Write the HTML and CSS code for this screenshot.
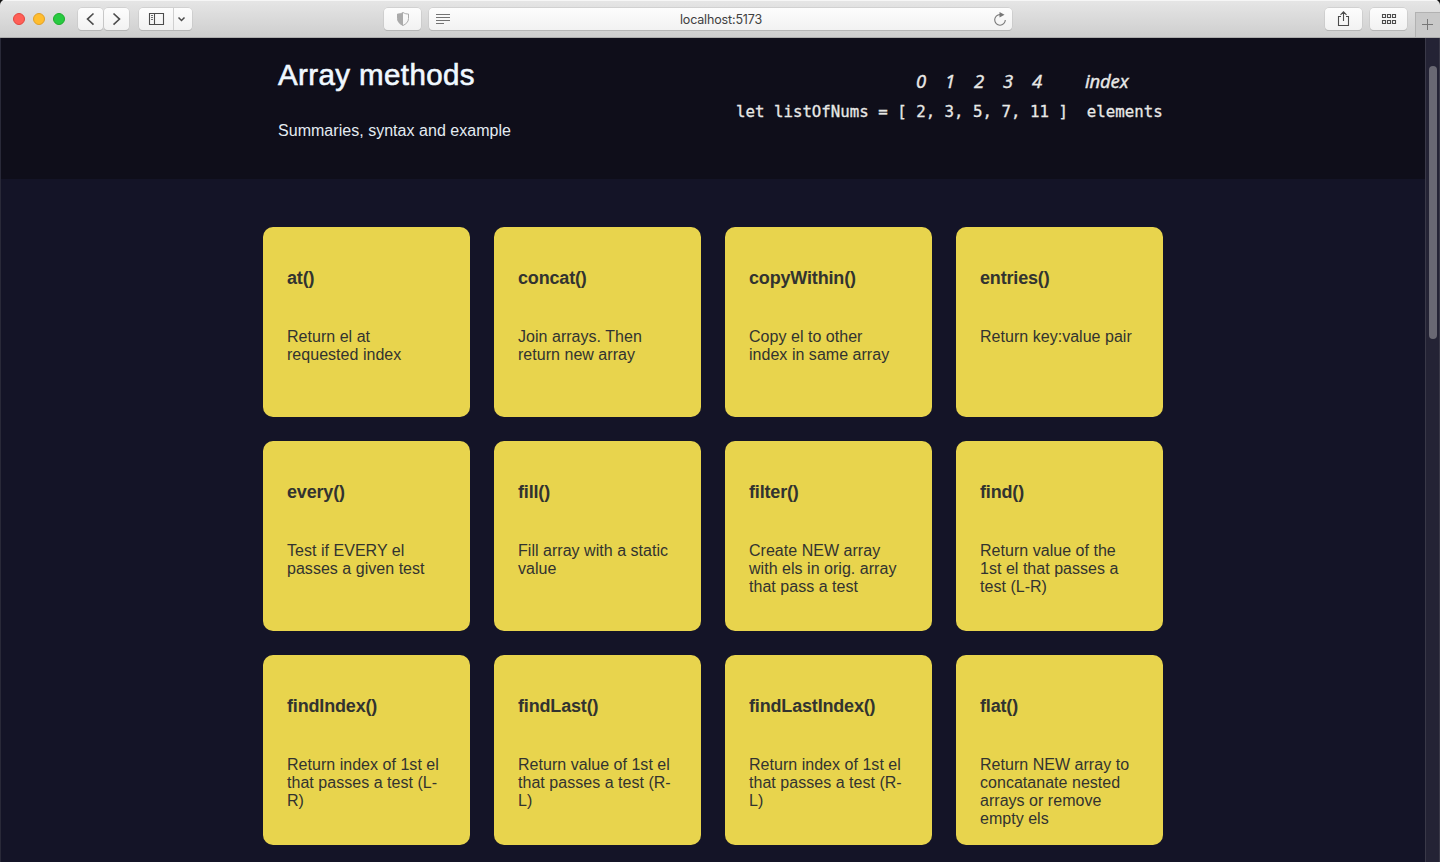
FILE: index.html
```html
<!DOCTYPE html>
<html lang="en">
<head>
<meta charset="utf-8">
<title>Array methods</title>
<link rel="stylesheet" href="styles.css">
</head>
<body>
<div class="window">
  <div class="toolbar">
    <div class="lights"><i class="light red"></i><i class="light amber"></i><i class="light green"></i></div>
    <div class="nav">
      <div class="btn back"><svg width="26" height="23" viewBox="0 0 26 23"><path d="M15.500 5.500l-6 5.600 6 5.600" class="line bold"/></svg></div>
      <div class="btn forward"><svg width="26" height="23" viewBox="0 0 26 23"><path d="M9.500 5.500l6 5.600-6 5.600" class="line bold"/></svg></div>
    </div>
    <div class="btn side">
      <svg width="54" height="23" viewBox="0 0 54 23"><path d="M10.500 5.500h14v11h-14zM15.500 5.500v11" class="line"/><path d="M12 7.500h2M12 9.500h2M12 11.500h2" class="line thin"/><path d="M34.500 0v23" class="divider"/><path d="M39.500 9.500l3 3 3-3" class="line mid"/></svg>
    </div>
    <div class="btn shield"><svg width="38" height="23" viewBox="0 0 38 23"><path d="M19 4.500c2 1.300 3.500 1.500 5.500 1.500v4.500c0 3.500-2.500 5.500-5.500 7-3-1.500-5.500-3.500-5.500-7V6c2 0 3.500-.2 5.500-1.500z" fill="none" stroke="#aaa"/><path d="M19 4.500v13c-3-1.500-5.500-3.500-5.500-7V6c2 0 3.500-.2 5.500-1.500z" fill="#aaa"/></svg></div>
    <div class="btn address">
      <svg width="30" height="23" viewBox="0 0 30 23"><path d="M7 6.500h14M7 9.500h14M7 12.500h14M7 15.500h8" class="line reader"/></svg>
      <span class="url">localhost:5173</span>
      <svg class="reload" width="24" height="23" viewBox="0 0 24 23"><path d="M12 6.600a5.300 5.300 0 1 0 5.300 5.400" fill="none" stroke="#777" stroke-width="1.100"/><path d="M11.500 4l5 2.700-5 2.800z" fill="#777"/></svg>
    </div>
    <div class="btn share"><svg width="38" height="23" viewBox="0 0 38 23"><path d="M16 8.500h-2.500v9h10v-9H21M18.500 13V4M15.500 6.800l3-3 3 3" class="line"/></svg></div>
    <div class="btn tabs"><svg width="38" height="23" viewBox="0 0 38 23"><path d="M12.500 6.500h3v3h-3zM17.500 6.500h3v3h-3zM22.500 6.500h3v3h-3zM12.500 12.500h3v3h-3zM17.500 12.500h3v3h-3zM22.500 12.500h3v3h-3z" class="line"/></svg></div>
    <div class="plus"><svg width="24" height="24" viewBox="0 0 24 24"><path d="M11.500 6v11M6 11.500h11" class="line plusline"/></svg></div>
  </div>
  <div class="viewport">
    <div class="page">
      <header class="hero">
        <div class="hero-inner">
          <div class="intro"><h1>Array methods</h1><p class="summary">Summaries, syntax and example</p></div>
          <div class="diagram">
            <div class="indices"><i>0</i><i>1</i><i>2</i><i>3</i><i>4</i><i class="index-word">index</i></div>
            <pre class="code">let listOfNums = [ 2, 3, 5, 7, 11 ]  elements</pre>
          </div>
        </div>
      </header>
      <main class="grid">
        <article class="card"><h2>at()</h2><p>Return el at<br>requested index</p></article>
        <article class="card"><h2>concat()</h2><p>Join arrays. Then<br>return new array</p></article>
        <article class="card"><h2>copyWithin()</h2><p>Copy el to other<br>index in same array</p></article>
        <article class="card"><h2>entries()</h2><p>Return key:value pair</p></article>
        <article class="card"><h2>every()</h2><p>Test if EVERY el<br>passes a given test</p></article>
        <article class="card"><h2>fill()</h2><p>Fill array with a static<br>value</p></article>
        <article class="card"><h2>filter()</h2><p>Create NEW array<br>with els in orig. array<br>that pass a test</p></article>
        <article class="card"><h2>find()</h2><p>Return value of the<br>1st el that passes a<br>test (L-R)</p></article>
        <article class="card"><h2>findIndex()</h2><p>Return index of 1st el<br>that passes a test (L-<br>R)</p></article>
        <article class="card"><h2>findLast()</h2><p>Return value of 1st el<br>that passes a test (R-<br>L)</p></article>
        <article class="card"><h2>findLastIndex()</h2><p>Return index of 1st el<br>that passes a test (R-<br>L)</p></article>
        <article class="card"><h2>flat()</h2><p>Return NEW array to<br>concatanate nested<br>arrays or remove<br>empty els</p></article>
      </main>
    </div>
    <div class="scrollbar"><div class="thumb"></div></div>
  </div>
</div>
</body>
</html>
```
FILE: styles.css
```css
* { box-sizing: border-box; }
html, body { margin: 0; height: 100%; overflow: hidden; background: #111; }
body { font-family: "Liberation Sans", Arial, sans-serif; }
svg { display: block; flex: none; }
.window { height: 862px; display: flex; flex-direction: column; border-radius: 5px 5px 0 0; overflow: hidden; }

.toolbar { height: 38px; flex: none; display: flex; align-items: flex-start; padding: 8px 0 0 13px; background: linear-gradient(#e6e6e6, #cecece); border-bottom: 1px solid #adadad; box-shadow: inset 0 1px #f6f6f6; }
.lights { display: flex; gap: 8px; padding-top: 5px; width: 65px; }
.light { width: 12px; height: 12px; border-radius: 50%; border: 1px solid; }
.red { background: #ff5f57; border-color: #e2463f; }
.amber { background: #ffbd2e; border-color: #e0a028; }
.green { background: #28ca41; border-color: #1dad2b; }
.nav { display: flex; width: 61px; }
.btn { height: 22px; border-radius: 4px; background: linear-gradient(#fdfdfd, #f2f2f2); box-shadow: 0 0 0 .5px #c2c2c2, 0 1px 0 #aaa; display: flex; flex: none; overflow: hidden; }
.back, .forward { width: 25px; }
.forward { margin-left: 1px; }
.side { width: 53px; }
.shield { width: 37px; margin-left: 192px; }
.address { width: 583px; margin-left: 8px; justify-content: space-between; }
.url { margin-right: 5px; font: 12.5px/23px Inter, Roboto, sans-serif; letter-spacing: -.15px; color: #404040; }
.share { width: 37px; margin-left: 313px; }
.tabs { width: 37px; margin-left: 8px; }
.plus { width: 25px; height: 25px; margin: 4px 0 0 8px; border: solid #b2b2b2; border-width: 1px 0 0 1px; background: #c9c9c9; }
.line { fill: none; stroke: #4c4c4c; stroke-width: 1.1; }
.bold { stroke-width: 1.6; }
.mid { stroke-width: 1.5; }
.thin { stroke-width: .8; }
.reader { stroke: #737373; stroke-width: 1; }
.plusline { stroke: #777; stroke-width: 1; }
.divider { stroke: #d0d0d0; }

.viewport { flex: 1; min-height: 0; display: flex; }
.page { flex: 1; background: #141427; border-left: 1px solid #292938; }
.hero { height: 141px; background: #0f0e1a; color: #f0f8ff; }
.hero-inner { width: 900px; margin: 0 auto; padding: 0 0 0 15px; display: flex; justify-content: space-between; }
h1 { margin: 20px 0 0; font-size: 29.5px; line-height: 34px; font-weight: 400; letter-spacing: .4px; -webkit-text-stroke: .6px #f0f8ff; }
.summary { margin: 29px 0 0; font-size: 16px; line-height: 19px; letter-spacing: .03px; opacity: .95; white-space: nowrap; }
.diagram { width: 427px; padding-top: 30px; color: #e8e8e6; }
.indices { display: flex; padding-left: 180px; font: italic 18.5px/25px "Noto Sans", sans-serif; -webkit-text-stroke: .35px #e8e8e6; }
.indices i { width: 29px; }
.indices .index-word { width: auto; margin-left: 24px; letter-spacing: -.2px; }
.code { margin: 9px 0 0; font: 15.75px/20px "DejaVu Sans Mono", monospace; -webkit-text-stroke: .3px #e8e8e6; }
.grid { width: 900px; margin: 48px auto 0; display: grid; grid-template-columns: repeat(4, 207px); grid-auto-rows: 190px; gap: 24px; }
.card { background: #e8d44d; color: #323330; border-radius: 10px; padding: 40px 0 0 24px; white-space: nowrap; }
.card h2 { margin: 0; font-size: 18px; line-height: 22px; letter-spacing: -.17px; }
.card p { margin: 39px 0 0; font-size: 16px; line-height: 18px; letter-spacing: .03px; }
.scrollbar { width: 15px; background: #242335; border: solid #3a3948; border-width: 0 1px; padding: 28px 0 0 3px; }
.thumb { width: 8px; height: 273px; border-radius: 4px; background: #696873; }
```
